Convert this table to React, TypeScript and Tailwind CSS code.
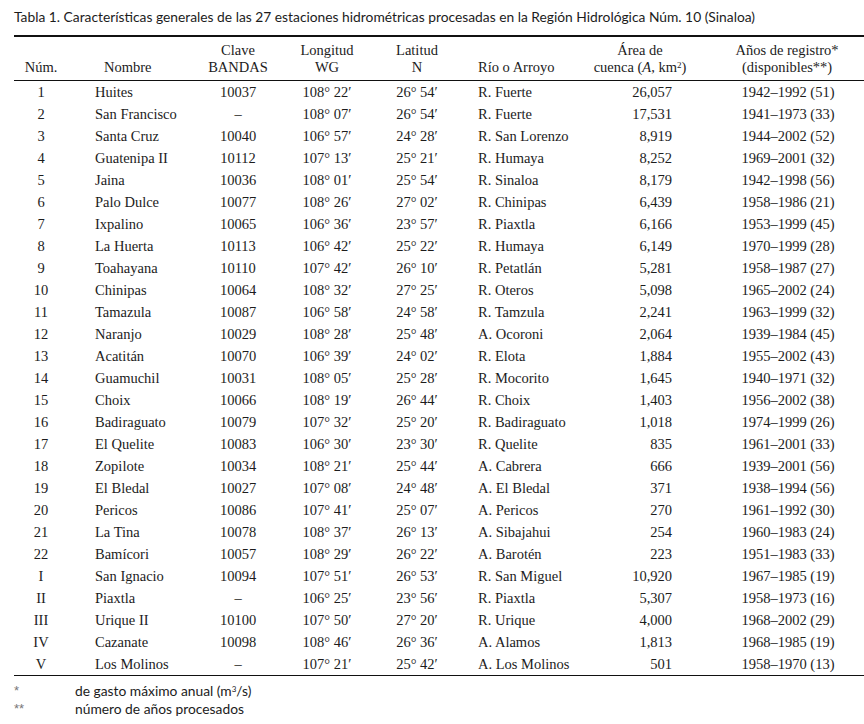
const rows: [string, string, string, string, string, string, string, string][] = [
  ['1', 'Huites', '10037', '108° 22′', '26° 54′', 'R. Fuerte', '26,057', '1942–1992 (51)'],
  ['2', 'San Francisco', '–', '108° 07′', '26° 54′', 'R. Fuerte', '17,531', '1941–1973 (33)'],
  ['3', 'Santa Cruz', '10040', '106° 57′', '24° 28′', 'R. San Lorenzo', '8,919', '1944–2002 (52)'],
  ['4', 'Guatenipa II', '10112', '107° 13′', '25° 21′', 'R. Humaya', '8,252', '1969–2001 (32)'],
  ['5', 'Jaina', '10036', '108° 01′', '25° 54′', 'R. Sinaloa', '8,179', '1942–1998 (56)'],
  ['6', 'Palo Dulce', '10077', '108° 26′', '27° 02′', 'R. Chinipas', '6,439', '1958–1986 (21)'],
  ['7', 'Ixpalino', '10065', '106° 36′', '23° 57′', 'R. Piaxtla', '6,166', '1953–1999 (45)'],
  ['8', 'La Huerta', '10113', '106° 42′', '25° 22′', 'R. Humaya', '6,149', '1970–1999 (28)'],
  ['9', 'Toahayana', '10110', '107° 42′', '26° 10′', 'R. Petatlán', '5,281', '1958–1987 (27)'],
  ['10', 'Chinipas', '10064', '108° 32′', '27° 25′', 'R. Oteros', '5,098', '1965–2002 (24)'],
  ['11', 'Tamazula', '10087', '106° 58′', '24° 58′', 'R. Tamzula', '2,241', '1963–1999 (32)'],
  ['12', 'Naranjo', '10029', '108° 28′', '25° 48′', 'A. Ocoroni', '2,064', '1939–1984 (45)'],
  ['13', 'Acatitán', '10070', '106° 39′', '24° 02′', 'R. Elota', '1,884', '1955–2002 (43)'],
  ['14', 'Guamuchil', '10031', '108° 05′', '25° 28′', 'R. Mocorito', '1,645', '1940–1971 (32)'],
  ['15', 'Choix', '10066', '108° 19′', '26° 44′', 'R. Choix', '1,403', '1956–2002 (38)'],
  ['16', 'Badiraguato', '10079', '107° 32′', '25° 20′', 'R. Badiraguato', '1,018', '1974–1999 (26)'],
  ['17', 'El Quelite', '10083', '106° 30′', '23° 30′', 'R. Quelite', '835', '1961–2001 (33)'],
  ['18', 'Zopilote', '10034', '108° 21′', '25° 44′', 'A. Cabrera', '666', '1939–2001 (56)'],
  ['19', 'El Bledal', '10027', '107° 08′', '24° 48′', 'A. El Bledal', '371', '1938–1994 (56)'],
  ['20', 'Pericos', '10086', '107° 41′', '25° 07′', 'A. Pericos', '270', '1961–1992 (30)'],
  ['21', 'La Tina', '10078', '108° 37′', '26° 13′', 'A. Sibajahui', '254', '1960–1983 (24)'],
  ['22', 'Bamícori', '10057', '108° 29′', '26° 22′', 'A. Barotén', '223', '1951–1983 (33)'],
  ['I', 'San Ignacio', '10094', '107° 51′', '26° 53′', 'R. San Miguel', '10,920', '1967–1985 (19)'],
  ['II', 'Piaxtla', '–', '106° 25′', '23° 56′', 'R. Piaxtla', '5,307', '1958–1973 (16)'],
  ['III', 'Urique II', '10100', '107° 50′', '27° 20′', 'R. Urique', '4,000', '1968–2002 (29)'],
  ['IV', 'Cazanate', '10098', '108° 46′', '26° 36′', 'A. Alamos', '1,813', '1968–1985 (19)'],
  ['V', 'Los Molinos', '–', '107° 21′', '25° 42′', 'A. Los Molinos', '501', '1958–1970 (13)'],
]

const cols = 'grid grid-cols-[54px_132px_76px_102px_78px_124px_120px_164px]'

export default function App() {
  return (
    <div className="w-[864px] h-[724px] bg-white text-[#1c1c1c] pl-[14px]">
      <p className="h-[35px] pt-[8px] font-['Lato',sans-serif] text-[13.8px] leading-[18px] whitespace-nowrap">
        Tabla 1. Características generales de las 27 estaciones hidrométricas procesadas en la Región Hidrológica Núm. 10 (Sinaloa)
      </p>

      <div className="font-['Liberation_Serif',serif] text-[14.5px]">
        <div className={`${cols} border-t-2 border-b border-[#111] pt-[5px] pb-[4px] leading-[17px]`}>
          <div className="flex items-end justify-center">Núm.</div>
          <div className="flex items-end pl-[36px]">Nombre</div>
          <div className="text-center">Clave<br />BANDAS</div>
          <div className="text-center">Longitud<br />WG</div>
          <div className="text-center">Latitud<br />N</div>
          <div className="flex items-end pl-[22px]">Río o Arroyo</div>
          <div className="text-center whitespace-nowrap">
            Área de<br />cuenca (<i>A</i>, km<sup className="text-[9px] leading-none">2</sup>)
          </div>
          <div className="text-center pl-[10px] whitespace-nowrap">
            Años de registro*<br />(disponibles**)
          </div>
        </div>

        <div className="border-b border-[#111]">
          {rows.map((r) => (
            <div key={r[0]} className={`${cols} h-[22px] items-center leading-[22px] whitespace-nowrap`}>
              <div className="text-center">{r[0]}</div>
              <div className="pl-[27px]">{r[1]}</div>
              <div className="text-center">{r[2]}</div>
              <div className="text-center">{r[3]}</div>
              <div className="text-center">{r[4]}</div>
              <div className="pl-[22px]">{r[5]}</div>
              <div className="text-right pr-[28px]">{r[6]}</div>
              <div className="text-center pl-[12px]">{r[7]}</div>
            </div>
          ))}
        </div>
      </div>

      <div className="pt-[6px] font-['Lato',sans-serif] text-[13.8px] leading-[18px]">
        <div className="flex h-[18px]">
          <span className="w-[61px] text-[#777] font-['Liberation_Sans',sans-serif] text-[13px]">*</span>
          <span>de gasto máximo anual (m<sup className="text-[8px] leading-none">3</sup>/s)</span>
        </div>
        <div className="flex h-[18px]">
          <span className="w-[61px] text-[#777] font-['Liberation_Sans',sans-serif] text-[13px]">**</span>
          <span>número de años procesados</span>
        </div>
      </div>
    </div>
  )
}
